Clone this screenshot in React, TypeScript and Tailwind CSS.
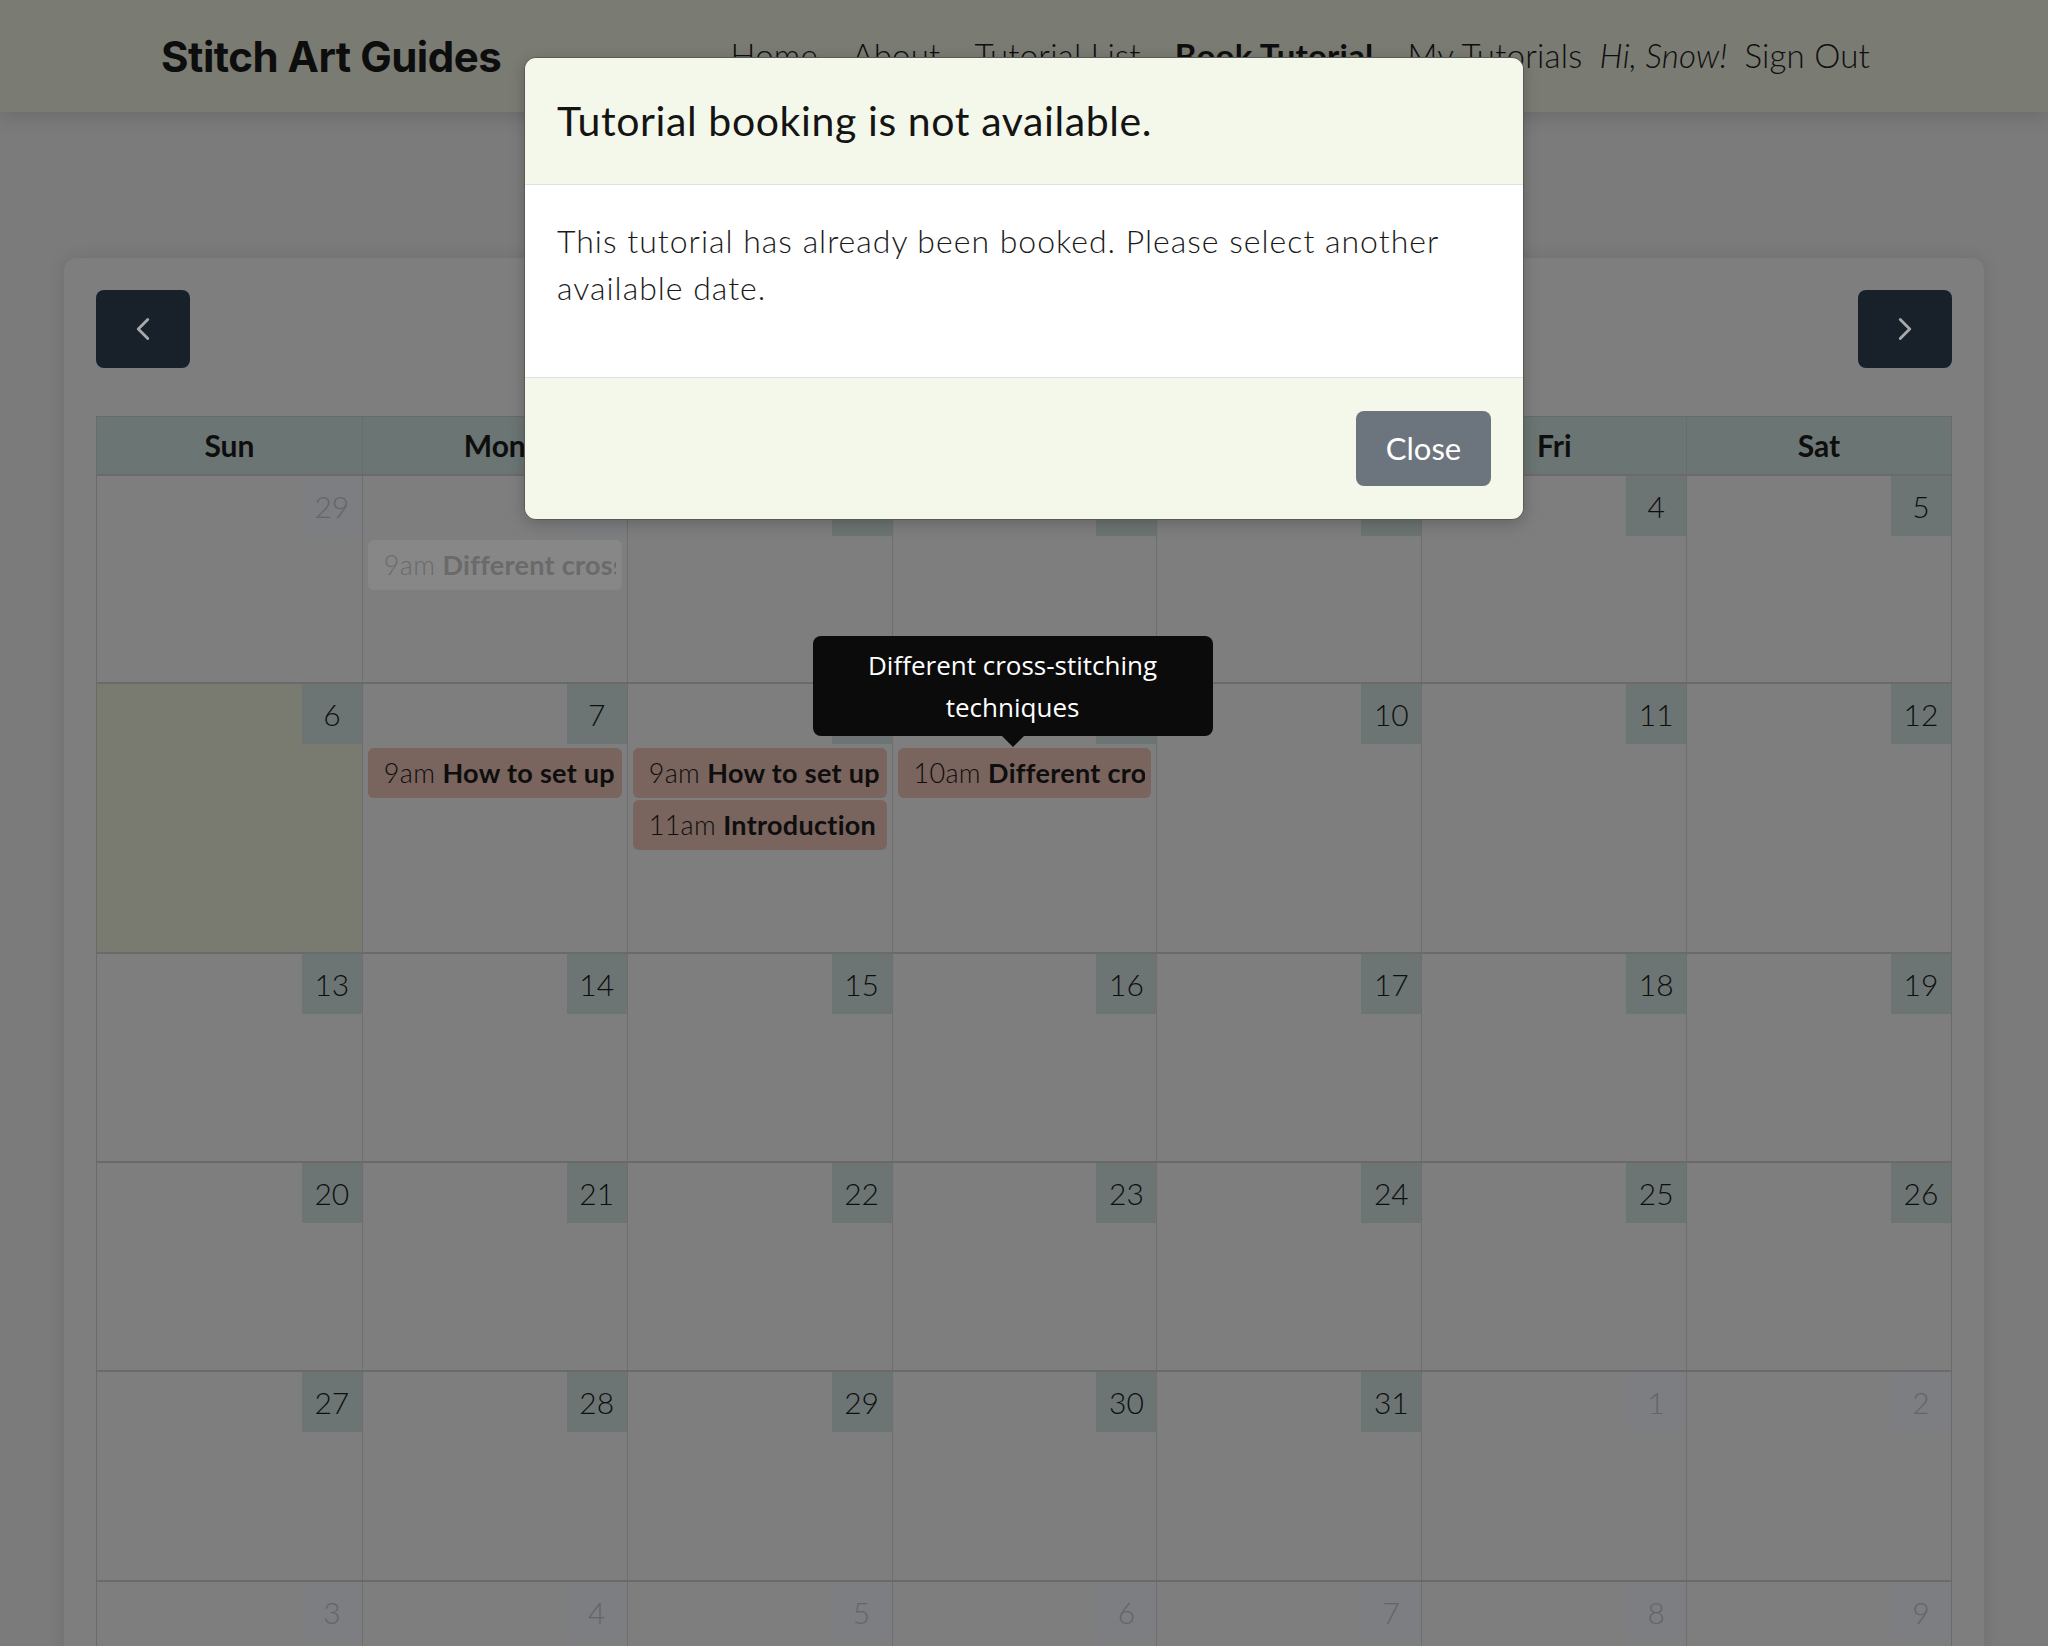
import { ChevronLeft, ChevronRight } from 'lucide-react'

type CalEvent = { time: string; title: string; past?: boolean; tip?: string }
type Day = { n: number; other?: boolean; today?: boolean; events?: CalEvent[] }
type Week = { h: string; days: Day[] }

const DAY_NAMES = ['Sun', 'Mon', 'Tue', 'Wed', 'Thu', 'Fri', 'Sat']

const range = (from: number, to: number, other = false): Day[] =>
  Array.from({ length: to - from + 1 }, (_, i) => ({ n: from + i, other }))

const WEEKS: Week[] = [
  {
    h: 'h-[208px]',
    days: [
      { n: 29, other: true },
      {
        n: 30,
        other: true,
        events: [{ time: '9am', title: 'Different cross-stitching techniques', past: true }],
      },
      ...range(1, 5),
    ],
  },
  {
    h: 'h-[270px]',
    days: [
      { n: 6, today: true },
      { n: 7, events: [{ time: '9am', title: 'How to set up your hoop' }] },
      {
        n: 8,
        events: [
          { time: '9am', title: 'How to set up your hoop' },
          { time: '11am', title: 'Introduction to cross-stitching' },
        ],
      },
      {
        n: 9,
        events: [
          {
            time: '10am',
            title: 'Different cross-stitching techniques',
            tip: 'Different cross-stitching techniques',
          },
        ],
      },
      ...range(10, 12),
    ],
  },
  { h: 'h-[209px]', days: range(13, 19) },
  { h: 'h-[209px]', days: range(20, 26) },
  { h: 'h-[210px]', days: [...range(27, 31), ...range(1, 2, true)] },
  { h: 'h-[209px]', days: range(3, 9, true) },
]

export default function App() {
  return (
    <div className="min-h-screen bg-[#7b7b7b] font-['Lato','Noto_Sans',sans-serif] text-[#0e0e0e]">
      <header className="h-[112px] bg-[#7a7b73] shadow-[0_6px_18px_rgba(0,0,0,0.12)] flex items-center pl-[161px] pr-[178px] relative z-10">
        <h1 className="font-['Inter',sans-serif] font-bold text-[42px] tracking-[-0.5px] text-[#0d0d0d]">
          Stitch Art Guides
        </h1>
        <nav className="ml-auto flex items-center text-[33px] font-light tracking-[0.2px]">
          <a className="mr-[34px]">Home</a>
          <a className="mr-[34px]">About</a>
          <a className="mr-[34px]">Tutorial List</a>
          <a className="mr-[34px] font-bold">Book Tutorial</a>
          <a className="mr-[17px]">My Tutorials</a>
          <span className="mr-[17px] italic">Hi, Snow!</span>
          <a>Sign Out</a>
        </nav>
      </header>

      <main className="px-16 pt-[146px]">
        <div className="bg-[#7e7e7e] rounded-xl shadow-[0_0_18px_rgba(0,0,0,0.1)] p-8">
          <div className="flex items-center justify-between mb-12">
            <button className="w-[94px] h-[78px] rounded-lg bg-[#18202a] flex items-center justify-center text-[#a8a8a8]">
              <ChevronLeft size={38} strokeWidth={1.8} />
            </button>
            <h2 className="text-[36px] font-bold">October 2024</h2>
            <button className="w-[94px] h-[78px] rounded-lg bg-[#18202a] flex items-center justify-center text-[#a8a8a8]">
              <ChevronRight size={38} strokeWidth={1.8} />
            </button>
          </div>

          <div className="border border-[#6a6a6a]">
            <div className="grid grid-cols-7 h-[57px] bg-[#6b7573]">
              {DAY_NAMES.map((d, i) => (
                <div
                  key={d}
                  className={`flex items-center justify-center text-[30px] font-bold ${i > 0 ? 'border-l border-[#676d6b]' : ''}`}
                >
                  {d}
                </div>
              ))}
            </div>
            {WEEKS.map((w, wi) => (
              <div key={wi} className={`grid grid-cols-7 border-t-2 border-[#6a6a6a] ${w.h}`}>
                {w.days.map((d, di) => (
                  <DayCell key={di} day={d} first={di === 0} />
                ))}
              </div>
            ))}
          </div>
        </div>
      </main>

      {/* modal */}
      <div className="fixed top-[57px] left-1/2 -translate-x-1/2 w-[1000px] rounded-xl overflow-hidden border border-[#5a5a55] shadow-[0_4px_16px_rgba(0,0,0,0.2)] z-30">
        <div className="h-[126px] bg-[#f4f8ea] flex items-center px-8">
          <h3 className="text-[41px] tracking-[0.6px] font-normal text-[#141414]">
            Tutorial booking is not available.
          </h3>
        </div>
        <div className="bg-white border-t border-[#dee2e6] px-8 pt-[32px] pb-[66px] text-[32px] tracking-[1px] leading-[47px] font-light text-[#1a1a1a]">
          This tutorial has already been booked. Please select another available date.
        </div>
        <div className="h-[142px] bg-[#f4f8ea] border-t border-[#dee2e6] flex items-center justify-end px-8">
          <button className="w-[135px] h-[75px] rounded-lg bg-[#6c757d] text-white text-[31px] font-normal">
            Close
          </button>
        </div>
      </div>
    </div>
  )
}

function DayCell({ day, first }: { day: Day; first: boolean }) {
  return (
    <div
      className={`flex flex-col ${first ? '' : 'border-l border-[#6e6e6e]'} ${day.today ? 'bg-[#797a70]' : ''}`}
    >
      <div className="flex justify-end">
        <div
          className={`w-[60px] h-[60px] flex items-center justify-center text-[30px] font-light ${
            day.other ? 'bg-[#7c7e81] text-[#656565]' : 'bg-[#6c7573] text-[#0e0e0e]'
          }`}
        >
          {day.n}
        </div>
      </div>
      {day.events && (
        <div className="mt-[4px] mx-[5px] flex flex-col gap-[2px]">
          {day.events.map((e, i) => (
            <EventChip key={i} ev={e} />
          ))}
        </div>
      )}
    </div>
  )
}

function EventChip({ ev }: { ev: CalEvent }) {
  return (
    <div className="relative">
      <div
        className={`h-[50px] rounded-md pl-4 pr-[6px] flex items-center text-[27px] tracking-[0.3px] ${
          ev.past ? 'bg-[#878787] text-[#6a6a6a]' : 'bg-[#79645e] text-[#0e0e0e]'
        }`}
      >
        <div className="overflow-hidden whitespace-nowrap">
          <span className="font-light">{ev.time}</span> <span className="font-bold">{ev.title}</span>
        </div>
      </div>
      {ev.tip && (
        <div className="absolute left-[-85px] bottom-[calc(100%+12px)] w-[400px] z-20">
          <div className="bg-[#0b0b0b] rounded-lg px-4 py-[8px] text-center text-white text-[26px] leading-[42px] font-['Open_Sans',sans-serif]">
            Different cross-stitching
            <br />
            techniques
          </div>
          <div className="absolute left-1/2 -translate-x-1/2 top-full w-0 h-0 border-l-[11px] border-r-[11px] border-t-[11px] border-l-transparent border-r-transparent border-t-[#0b0b0b]" />
        </div>
      )}
    </div>
  )
}
